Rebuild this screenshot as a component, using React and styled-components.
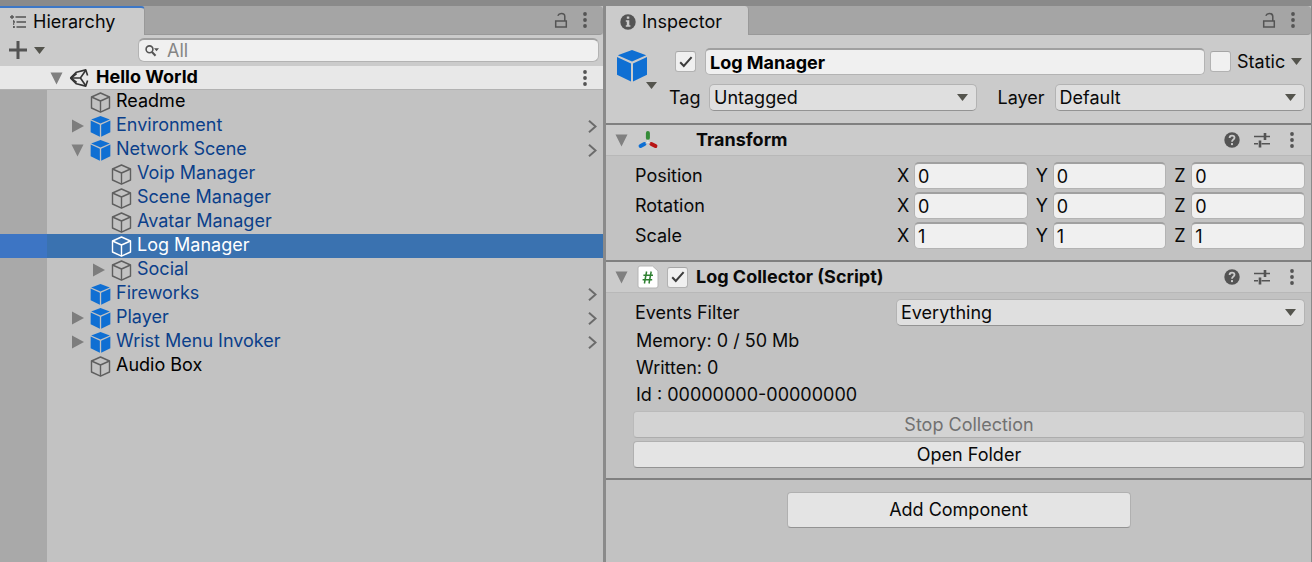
import React, { useState } from "react";
import styled, { createGlobalStyle, css } from "styled-components";

const GlobalStyle = createGlobalStyle`
  *, *::before, *::after { box-sizing: border-box; }
  html, body, #root { min-height: 100vh; }
  body {
    margin: 0;
    background: #8a8a8a;
    color: #090909;
    font: 400 18px/24px Inter, "Liberation Sans", sans-serif;
  }
  button, input, select { font: inherit; color: inherit; margin: 0; }
  svg { display: block; flex: none; }
`;

/* ---------- layout ---------- */

const Editor = styled.main`
  display: grid;
  grid-template-columns: minmax(0, 603fr) minmax(0, 705fr);
  gap: 3px;
  min-height: 100vh;
  padding: 6px 1px 0 0;
  background: #8a8a8a;
`;

const Panel = styled.section`
  display: flex;
  flex-direction: column;
  min-width: 0;
  background: #c2c2c2;
`;

const TabBar = styled.header`
  display: flex;
  align-items: stretch;
  height: 29px;
  background: #a5a5a5;
  border-bottom: 1px solid #999999;
  border-radius: 0 4px 4px 0;
`;

const Tab = styled.h2`
  display: flex;
  align-items: center;
  gap: 6px;
  height: 29px;
  margin: 0;
  padding: ${(p) => (p.$active ? "0 29px 0 10px" : "2px 26px 0 14px")};
  background: #cbcbcb;
  border-top: ${(p) => (p.$active ? "2px solid #3d77c6" : "0")};
  border-right: 1px solid #999999;
  border-radius: 0 4px 0 0;
  font-size: 18px;
  font-weight: 400;
`;

const TabTools = styled.div`
  display: flex;
  align-items: center;
  gap: 15px;
  margin-left: auto;
  padding-right: 16px;
`;

const IconButton = styled.button`
  display: flex;
  align-items: center;
  justify-content: center;
  gap: 6px;
  padding: 0;
  border: 0;
  background: none;
  color: #545454;
`;

/* ---------- hierarchy ---------- */

const Toolbar = styled.div`
  display: flex;
  align-items: center;
  justify-content: space-between;
  height: 31px;
  padding: 0 4px 1px 8px;
  background: #cbcbcb;
`;

const Search = styled.label`
  display: flex;
  align-items: center;
  gap: 8px;
  width: 78%;
  height: 24px;
  padding-left: 6px;
  border: 1px solid #b3b3b3;
  border-top: 2px solid #a0a0a0;
  border-radius: 6px;
  background: #f0f0f0;
  color: #545454;
`;

const SearchInput = styled.input`
  flex: 1;
  min-width: 0;
  height: 21px;
  padding: 0;
  border: 0;
  outline: 0;
  background: none;
  &::placeholder { color: #858585; opacity: 1; }
`;

const SceneRow = styled.div`
  display: flex;
  align-items: center;
  height: 24px;
  padding: 0 16px 0 50px;
  background: #e8e8e8;
  border-bottom: 1px solid #b2b2b2;
`;

const SceneName = styled.h3`
  flex: 1;
  margin: 0;
  padding: 0 0 2px 7px;
  font-size: 18px;
  font-weight: 700;
  color: #000;
`;

const Tree = styled.ul`
  flex: 1;
  margin: 0;
  padding: 0;
  list-style: none;
  background: linear-gradient(to right, #a9a9a9 47px, #c2c2c2 47px);
`;

const TreeRow = styled.li`
  display: flex;
  align-items: center;
  height: 24px;
  padding-left: ${(p) => 69 + p.$depth * 21}px;
  padding-right: 6px;
  color: ${(p) => (p.$selected ? "#fff" : p.$prefab ? "#0b3f8a" : "#000")};
  ${(p) =>
    p.$selected &&
    css`
      background: linear-gradient(to right, #3d75c4 47px, #3a72b0 47px);
    `}
`;

const FoldSlot = styled.span`
  display: flex;
  flex: none;
  align-items: center;
  justify-content: center;
  width: 21px;
  padding-right: 4px;
`;

const NodeName = styled.span`
  flex: 1;
  padding: 0 0 2px 5px;
  white-space: nowrap;
`;

/* ---------- inspector ---------- */

const ObjectHeader = styled.div`
  display: flex;
  gap: 12px;
  padding: 13px 6px 12px 11px;
  background: #cbcbcb;
`;

const ObjectIcon = styled.button`
  display: grid;
  align-content: start;
  justify-items: end;
  width: 40px;
  padding: 2px 0 0;
  border: 0;
  background: none;
`;

const PrefabPicture = styled.span`
  justify-self: start;
`;

const HeaderRows = styled.div`
  display: flex;
  flex: 1;
  flex-direction: column;
  gap: 9px;
  min-width: 0;
`;

const HeaderRow = styled.div`
  display: flex;
  align-items: center;
  min-width: 0;
  padding-left: ${(p) => p.$indent || 0}px;
  padding-right: ${(p) => p.$inset || 0}px;
`;

const sunken = css`
  min-width: 0;
  height: 27px;
  border: 1px solid #b3b3b3;
  border-top: 2px solid #a0a0a0;
  border-radius: 5px;
  background: #f0f0f0;
  outline: 0;
`;

const NameInput = styled.input`
  ${sunken}
  flex: 1;
  margin: 0 5px 0 9px;
  padding: 0 4px;
  font-weight: 700;
  color: #000;
`;

const TickBox = styled.span`
  display: grid;
  flex: none;
  width: 21px;
  height: 21px;
  & > * { grid-area: 1 / 1; }
  & > svg { place-self: center; pointer-events: none; }
`;

const Tick = styled.input`
  appearance: none;
  width: 21px;
  height: 21px;
  border: 1px solid #b2b2b2;
  border-top-color: #a5a5a5;
  border-radius: 3px;
  background: #f0f0f0;
`;

const StaticLabel = styled.label`
  min-width: 50px;
  margin: 0 4px 0 6px;
`;

const FieldLabel = styled.label`
  flex: none;
  width: ${(p) => p.$width};
`;

const SelectBox = styled.span`
  display: grid;
  flex: ${(p) => p.$grow || 1} 1 0;
  min-width: 0;
  & > * { grid-area: 1 / 1; }
  & > svg { place-self: center end; margin-right: 9px; pointer-events: none; }
`;

const Select = styled.select`
  appearance: none;
  width: 100%;
  height: 27px;
  padding: 0 24px 0 4px;
  border: 1px solid #b3b3b3;
  border-bottom-color: #939393;
  border-radius: 5px;
  background: #dfdfdf;
`;

const Component = styled.section`
  border-top: 2px solid #808080;
`;

const ComponentHeader = styled.header`
  display: flex;
  align-items: center;
  height: 31px;
  padding: 0 17px 0 9px;
  background: #cbcbcb;
  border-bottom: 1px solid #b8b8b8;
`;

const ComponentLead = styled.div`
  display: flex;
  align-items: center;
  gap: 8px;
  width: 81px;
`;

const ComponentTitle = styled.h3`
  flex: 1;
  margin: 0;
  font-size: 18px;
  font-weight: 700;
`;

const ComponentTools = styled.div`
  display: grid;
  grid-template-columns: 30px 36px 4px;
  align-items: center;
  justify-items: start;
`;

const Fields = styled.div`
  display: flex;
  flex-direction: column;
  gap: 3px;
  padding: 6px 6px 11px 29px;
`;

const FieldRow = styled.div`
  display: grid;
  grid-template-columns: minmax(0, 261fr) minmax(0, 409fr);
  align-items: center;
`;

const Axes = styled.div`
  display: grid;
  grid-template-columns: repeat(3, minmax(0, 1fr));
  gap: 8px;
  padding-left: 1px;
`;

const Axis = styled.label`
  display: flex;
  align-items: center;
`;

const AxisName = styled.span`
  flex: none;
  width: 17px;
`;

const AxisInput = styled.input`
  ${sunken}
  flex: 1;
  width: 100%;
  padding: 0 3px;
`;

const Stats = styled.div`
  margin-top: -2px;
  padding: 0 1px;
  line-height: 27px;
`;

const StatLine = styled.p`
  margin: 0;
`;

const Buttons = styled.div`
  display: grid;
  gap: 3px;
  margin: 0 0 -1px -2px;
`;

const Button = styled.button`
  height: ${(p) => (p.$large ? "36px" : "27px")};
  width: ${(p) => (p.$large ? "344px" : "100%")};
  max-width: 100%;
  padding: 0;
  border: 1px solid #b0b0b0;
  border-bottom-color: #939393;
  border-radius: 4px;
  background: #e4e4e4;
  &:disabled {
    border-color: #bababa;
    border-bottom-color: #adadad;
    background: #d3d3d3;
    color: #717171;
  }
`;

const Footer = styled.footer`
  display: flex;
  flex: 1;
  align-items: flex-start;
  justify-content: center;
  padding: 12px;
  border-top: 2px solid #808080;
`;

/* ---------- icons ---------- */

const Dots = () => (
  <svg width="4" height="16" viewBox="0 0 4 16" fill="#545454">
    <circle cx="2" cy="2" r="1.9" />
    <circle cx="2" cy="8" r="1.9" />
    <circle cx="2" cy="14" r="1.9" />
  </svg>
);

const Lock = () => (
  <svg width="14" height="16" viewBox="0 0 14 16" fill="none" stroke="#545454" strokeWidth="1.5">
    <rect x="1.7" y="9" width="10.6" height="6" />
    <path d="M10.8 9V4.6C10.8 2.6 9.4 1.6 7.4 1.6C5.6 1.6 4.4 2.4 3.8 3.8" />
  </svg>
);

const Caret = () => (
  <svg width="11" height="7" viewBox="0 0 11 7">
    <path d="M0 0H11L5.5 7Z" fill="#54544d" />
  </svg>
);

const Fold = ({ open }) => (
  <svg width="13" height="14" viewBox="0 0 13 14">
    <path d={open ? "M0.5 1.5H12.5L6.5 13.5Z" : "M1 0.5L13 7L1 13.5Z"} fill={open ? "#808080" : "#7d7d7d"} />
  </svg>
);

const SolidCube = ({ width = 21, height = 21 }) => (
  <svg width={width} height={height} viewBox="0 0 30 32">
    <path d="M15 0L29.2 5.2L15 11.6L0.8 5.2Z" fill="#0f6fd3" />
    <path d="M0 7L14 13.4V31.6L0 24.8Z" fill="#0f6fd3" />
    <path d="M30 7L16 13.4V31.6L30 24.8Z" fill="#0f6fd3" />
  </svg>
);

const WireCube = ({ light }) => (
  <svg width="21" height="21" viewBox="0 0 21 21" fill="none" stroke={light ? "#fff" : "#5f5f5f"} strokeWidth="1.4" strokeLinejoin="round">
    <path d="M10.5 1L19.5 5V16L10.5 20.2L1.5 16V5Z" />
    <path d="M1.5 5L10.5 9L19.5 5M10.5 9V20" />
  </svg>
);

const HierarchyIcon = () => (
  <svg width="17" height="14" viewBox="0 0 17 14" stroke="#545454" strokeWidth="1.3" fill="none">
    <path d="M0 2H4M5.5 2H16M2 0V4M3 7H5M6.5 7H16M3 12H5M6.5 12H16" />
    <path d="M3.7 5V14" strokeWidth="1" strokeDasharray="2 1" />
  </svg>
);

const InfoIcon = () => (
  <svg width="16" height="16" viewBox="0 0 16 16">
    <circle cx="8" cy="8" r="7.7" fill="#545454" />
    <path d="M6.8 2.6H9.3V4.8H6.8ZM5.8 6.2H9.3V11.2H10.4V12.8H5.8V11.2H6.8V7.8H5.8Z" fill="#cbcbcb" />
  </svg>
);

const PlusIcon = () => (
  <svg width="20" height="20" viewBox="0 0 20 20">
    <path d="M10 1V19M1 10H19" stroke="#545454" strokeWidth="3" />
  </svg>
);

const SearchIcon = () => (
  <svg width="14" height="12" viewBox="0 0 14 12" fill="none" stroke="#545454">
    <circle cx="4.5" cy="4.3" r="3.4" strokeWidth="1.6" />
    <path d="M7 7L10.5 10.8" strokeWidth="2" />
    <path d="M9 3.2H14L11.5 6.2Z" fill="#545454" stroke="none" />
  </svg>
);

const UnityIcon = () => (
  <svg width="20" height="18" viewBox="0 0 20 18" fill="none" stroke="#333" strokeWidth="1.6">
    <path d="M1.4 9L7.4 3.2L16.8 0.9L18.6 6.6" strokeLinejoin="round" />
    <path d="M1.4 9L7.4 14.8L16.8 17.1L18.6 11.4" strokeLinejoin="round" />
    <path d="M1.8 9H11.4L16.8 1.2M11.4 9L16.8 16.8" />
    <path d="M2 9L7.6 4.6M2 9L7.6 13.4" />
  </svg>
);

const Chevron = () => (
  <svg width="9" height="13" viewBox="0 0 9 13">
    <path d="M1 0.8L7.6 6.5L1 12.2" fill="none" stroke="#6b6b6b" strokeWidth="2" />
  </svg>
);

const Check = () => (
  <svg width="14" height="12" viewBox="0 0 14 12">
    <path d="M1.2 6.2L4.8 10L12.6 1.2" fill="none" stroke="#3c3c3c" strokeWidth="2" />
  </svg>
);

const TransformIcon = () => (
  <svg width="23" height="20" viewBox="0 0 23 20" strokeLinecap="round">
    <path d="M11.9 3L11.9 8" stroke="#358b38" strokeWidth="4" />
    <path d="M8.4 14L4.6 16" stroke="#0f6fd3" strokeWidth="4" />
    <path d="M15.4 14L19.4 16" stroke="#b81414" strokeWidth="4" />
    <path d="M11.9 10V12.2L10 13M11.9 12.2L13.8 13" stroke="#e4e4e4" strokeWidth="1" fill="none" />
  </svg>
);

const ScriptIcon = () => (
  <svg width="23" height="24" viewBox="0 0 23 24">
    <path d="M4 1H16.5L22 6V21Q22 23 20 23H4Q2 23 2 21V3Q2 1 4 1Z" fill="#fff" stroke="#b5b5b5" />
    <path d="M10.6 6.5L8.4 18.5M15.2 6.5L13 18.5M7.4 10.2H17M6.6 14.8H16.2" stroke="#2f8132" strokeWidth="1.5" fill="none" />
  </svg>
);

const HelpIcon = () => (
  <svg width="16" height="16" viewBox="0 0 16 16">
    <circle cx="8" cy="8" r="7.7" fill="#545454" />
    <path d="M5.6 6C5.6 4.4 6.6 3.6 8 3.6C9.5 3.6 10.5 4.5 10.5 5.8C10.5 7.6 8 7.6 8 9.8" fill="none" stroke="#cbcbcb" strokeWidth="1.8" />
    <rect x="7" y="11.1" width="2" height="2" fill="#cbcbcb" />
  </svg>
);

const PresetIcon = () => (
  <svg width="16" height="16" viewBox="0 0 16 16" fill="none" stroke="#545454">
    <path d="M0 4.5H10M12 4.5H16M0 11.8H4M7.5 11.8H16" strokeWidth="1.6" />
    <path d="M11 1V8M6 8.4V15.4" strokeWidth="2.6" />
  </svg>
);

/* ---------- pieces ---------- */

const CheckField = ({ label, id, initial = false }) => {
  const [on, setOn] = useState(initial);
  return (
    <TickBox>
      <Tick type="checkbox" id={id} aria-label={label} checked={on} onChange={() => setOn(!on)} />
      {on && <Check />}
    </TickBox>
  );
};

const DropDown = ({ id, value, grow }) => (
  <SelectBox $grow={grow}>
    <Select id={id} defaultValue={value}>
      <option>{value}</option>
    </Select>
    <Caret />
  </SelectBox>
);

const nodes = [
  { name: "Readme", depth: 0 },
  { name: "Environment", depth: 0, prefab: true, solid: true, fold: "closed", link: true },
  { name: "Network Scene", depth: 0, prefab: true, solid: true, fold: "open", link: true },
  { name: "Voip Manager", depth: 1, prefab: true },
  { name: "Scene Manager", depth: 1, prefab: true },
  { name: "Avatar Manager", depth: 1, prefab: true },
  { name: "Log Manager", depth: 1, prefab: true, selected: true },
  { name: "Social", depth: 1, prefab: true, fold: "closed" },
  { name: "Fireworks", depth: 0, prefab: true, solid: true, link: true },
  { name: "Player", depth: 0, prefab: true, solid: true, fold: "closed", link: true },
  { name: "Wrist Menu Invoker", depth: 0, prefab: true, solid: true, fold: "closed", link: true },
  { name: "Audio Box", depth: 0 },
];

const TreeNode = ({ node }) => (
  <TreeRow $depth={node.depth} $prefab={node.prefab} $selected={node.selected}>
    <FoldSlot>
      {node.fold && (
        <IconButton aria-label={`Toggle ${node.name}`}>
          <Fold open={node.fold === "open"} />
        </IconButton>
      )}
    </FoldSlot>
    {node.solid ? <SolidCube /> : <WireCube light={node.selected} />}
    <NodeName>{node.name}</NodeName>
    {node.link && (
      <IconButton aria-label={`Open ${node.name}`}>
        <Chevron />
      </IconButton>
    )}
  </TreeRow>
);

const PanelTools = () => (
  <TabTools>
    <IconButton aria-label="Lock"><Lock /></IconButton>
    <IconButton aria-label="Panel menu"><Dots /></IconButton>
  </TabTools>
);

const HeaderTools = () => (
  <ComponentTools>
    <IconButton aria-label="Help"><HelpIcon /></IconButton>
    <IconButton aria-label="Presets"><PresetIcon /></IconButton>
    <IconButton aria-label="Component menu"><Dots /></IconButton>
  </ComponentTools>
);

const VectorField = ({ name, value }) => (
  <FieldRow>
    <span>{name}</span>
    <Axes role="group" aria-label={name}>
      {["X", "Y", "Z"].map((axis) => (
        <Axis key={axis}>
          <AxisName>{axis}</AxisName>
          <AxisInput type="text" defaultValue={value} />
        </Axis>
      ))}
    </Axes>
  </FieldRow>
);

const HierarchyPanel = () => (
  <Panel>
    <TabBar>
      <Tab $active><HierarchyIcon />Hierarchy</Tab>
      <PanelTools />
    </TabBar>
    <Toolbar>
      <IconButton aria-label="Create"><PlusIcon /><Caret /></IconButton>
      <Search>
        <SearchIcon />
        <SearchInput type="text" placeholder="All" aria-label="Search" />
      </Search>
    </Toolbar>
    <SceneRow>
      <IconButton aria-label="Toggle Hello World"><Fold open /><UnityIcon /></IconButton>
      <SceneName>Hello World</SceneName>
      <IconButton aria-label="Scene menu"><Dots /></IconButton>
    </SceneRow>
    <Tree>
      {nodes.map((node) => <TreeNode key={node.name} node={node} />)}
    </Tree>
  </Panel>
);

const InspectorPanel = () => (
  <Panel>
    <TabBar>
      <Tab><InfoIcon />Inspector</Tab>
      <PanelTools />
    </TabBar>
    <ObjectHeader>
      <ObjectIcon aria-label="Select icon">
        <PrefabPicture><SolidCube width={30} height={32} /></PrefabPicture>
        <Caret />
      </ObjectIcon>
      <HeaderRows>
        <HeaderRow $indent={6} $inset={3}>
          <CheckField label="Active" initial />
          <NameInput type="text" defaultValue="Log Manager" aria-label="Name" />
          <CheckField id="static" />
          <StaticLabel htmlFor="static">Static</StaticLabel>
          <IconButton aria-label="Static options"><Caret /></IconButton>
        </HeaderRow>
        <HeaderRow>
          <FieldLabel htmlFor="tag" $width="40px">Tag</FieldLabel>
          <DropDown id="tag" value="Untagged" grow={267} />
          <HeaderRow $indent={21}>
            <FieldLabel htmlFor="layer" $width="57px">Layer</FieldLabel>
          </HeaderRow>
          <DropDown id="layer" value="Default" grow={250} />
        </HeaderRow>
      </HeaderRows>
    </ObjectHeader>
    <Component>
      <ComponentHeader>
        <ComponentLead>
          <IconButton aria-label="Toggle Transform"><Fold open /></IconButton>
          <TransformIcon />
        </ComponentLead>
        <ComponentTitle>Transform</ComponentTitle>
        <HeaderTools />
      </ComponentHeader>
      <Fields>
        <VectorField name="Position" value="0" />
        <VectorField name="Rotation" value="0" />
        <VectorField name="Scale" value="1" />
      </Fields>
    </Component>
    <Component>
      <ComponentHeader>
        <ComponentLead>
          <IconButton aria-label="Toggle Log Collector"><Fold open /></IconButton>
          <ScriptIcon />
          <CheckField label="Enabled" initial />
        </ComponentLead>
        <ComponentTitle>Log Collector (Script)</ComponentTitle>
        <HeaderTools />
      </ComponentHeader>
      <Fields>
        <FieldRow>
          <label htmlFor="filter">Events Filter</label>
          <DropDown id="filter" value="Everything" />
        </FieldRow>
        <Stats>
          <StatLine>Memory: 0 / 50 Mb</StatLine>
          <StatLine>Written: 0</StatLine>
          <StatLine>Id : 00000000-00000000</StatLine>
        </Stats>
        <Buttons>
          <Button disabled>Stop Collection</Button>
          <Button>Open Folder</Button>
        </Buttons>
      </Fields>
    </Component>
    <Footer>
      <Button $large>Add Component</Button>
    </Footer>
  </Panel>
);

export default function App() {
  return (
    <>
      <GlobalStyle />
      <Editor>
        <HierarchyPanel />
        <InspectorPanel />
      </Editor>
    </>
  );
}
